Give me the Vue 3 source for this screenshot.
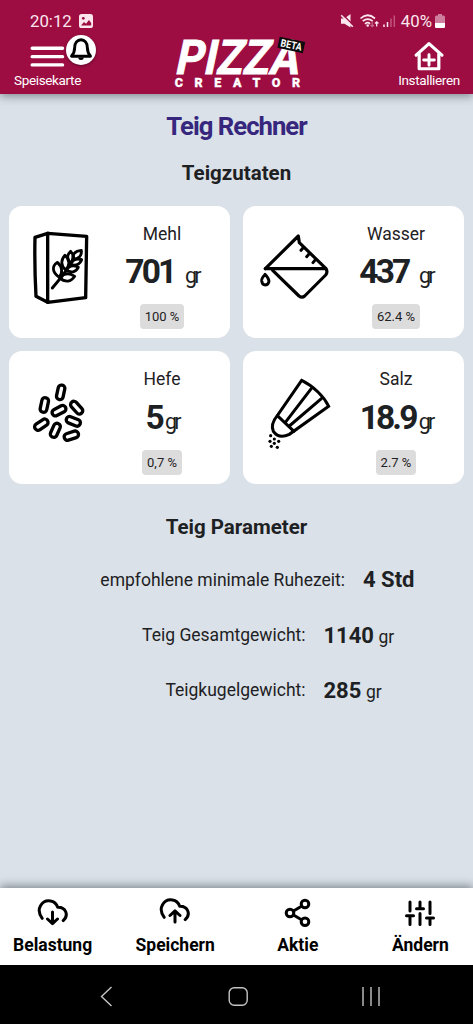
<script setup>
const ingredients = [
  { id: 'flour', name: 'Mehl', amount: '701', gap: true, share: '100 %', box: '27 33 258 396' },
  { id: 'water', name: 'Wasser', amount: '437', gap: true, share: '62.4 %', box: '30 33 258 396' },
  { id: 'yeast', name: 'Hefe', amount: '5', gap: false, share: '0,7 %', box: '27 18 258 396' },
  { id: 'salt', name: 'Salz', amount: '18.9', gap: false, share: '2.7 %', box: '30 18 258 396' },
]
const grains = [
  [182, 142, 12], [133, 180, 12], [177, 197, 62], [230, 188, -42],
  [220, 229, -68], [124, 239, 56], [166, 256, 24], [214, 272, 72],
]
const specks = [[113, 272], [124, 282], [111, 289], [137, 289], [124, 295], [115, 304], [133, 307]]
const params = [
  { label: 'empfohlene minimale Ruhezeit:', value: '4 Std', unit: '', cls: 'p1' },
  { label: 'Teig Gesamtgewicht:', value: '1140', unit: 'gr', cls: 'p2' },
  { label: 'Teigkugelgewicht:', value: '285', unit: 'gr', cls: 'p3' },
]
</script>

<template>
  <div class="screen">
    <header class="top">
      <div class="status">
        <span class="clock">20:12</span>
        <svg class="photo" width="14" height="14" viewBox="0 0 14 14">
          <rect width="14" height="14" rx="2.6" fill="#fbe6ee" />
          <circle cx="4.3" cy="4.3" r="1.4" fill="#9d0d42" />
          <path d="M2 11.4 5 8l2 1.7L10 6l2.2 3v2.4z" fill="#9d0d42" />
        </svg>
        <svg class="signals" width="56" height="16" viewBox="0 0 56 16" fill="none" stroke="#fbe6ee">
          <path d="M1 5.500h3.500L10.500 1v13.500L4.500 10.800H1z" fill="#fbe6ee" stroke="none" />
          <path d="M2.500 1.500 14 13" stroke="#9d0d42" stroke-width="1.600" />
          <path d="M1.200 2.200 12.800 13.800" stroke-width="1.600" />
          <path d="M20.500 5.500q7-6.500 14.500 0M22.700 8.200q5-4.300 10 0M25 10.800q2.800-2.200 5 0" stroke-width="1.700" />
          <circle cx="27.700" cy="12.500" r="1.300" fill="#fbe6ee" stroke="none" />
          <path d="M32.200 8.500v5M30.500 12l1.700 1.700 1.700-1.700" stroke="#c66a8c" stroke-width="1.200" />
          <path d="M36.700 13.500V9M35 10.500 36.700 8.800 38.400 10.500" stroke-width="1.300" />
          <path d="M44 14v-2.500M47.500 14V9" stroke-width="1.500" />
          <path d="M51 14V5.500M54.300 14V2.500" stroke="#c1537c" stroke-width="1.500" />
        </svg>
        <span class="percent">40%</span>
        <svg class="battery" width="10" height="14" viewBox="0 0 10 14">
          <path d="M3 0h4v1.500h1.500Q10 1.500 10 3v9.500Q10 14 8.500 14h-7Q0 14 0 12.500V3Q0 1.500 1.500 1.500H3z" fill="#cf7d9d" />
          <path d="M0 9h10v3.500Q10 14 8.500 14h-7Q0 14 0 12.500z" fill="#fff" />
        </svg>
      </div>
      <div class="brandbar">
        <div class="action menu">
          <svg class="bars" width="68" height="36" viewBox="0 0 68 36" fill="none" stroke="#fff" stroke-width="3.400" stroke-linecap="round">
            <path d="M17.700 12.600h31.300M17.700 21.300h31.300M17.700 29.700h31.300" />
          </svg>
          <span class="badge">
            <svg width="30" height="30" viewBox="0 0 30 30" fill="none" stroke="#000" stroke-width="2.900" stroke-linejoin="round" stroke-linecap="round">
              <path d="M5.500 21.200h19c-2.200-2.600-3.200-5.400-3.200-9C21.300 8 18.700 4.700 15 4.700S8.700 8 8.700 12.200c0 3.600-1 6.400-3.200 9z" />
              <path d="M12.300 22.500a2.700 2.500 0 0 0 5.400 0z" fill="#000" stroke="none" />
            </svg>
          </span>
          <span class="caption">Speisekarte</span>
        </div>
        <svg class="logo" width="136" height="58" viewBox="170 36 136 58">
          <g fill="#fff" font-family="Roboto, sans-serif" font-weight="700">
            <text transform="translate(174 73.800) skewX(-12)" font-size="48" font-weight="700" textLength="123.500" lengthAdjust="spacingAndGlyphs" stroke="#fff" stroke-width=".9">PIZZA</text>
            <text x="174.700" y="87.300" font-size="12.500" font-weight="900" textLength="125.500" stroke="#fff" stroke-width=".3">CREATOR</text>
          </g>
          <g transform="rotate(12 291.500 44)">
            <rect x="278.500" y="39.300" width="26" height="11.400" fill="#0b0b0b" />
            <text x="280.800" y="48.700" font-size="10.500" font-weight="700" font-family="Roboto, sans-serif" textLength="21.500" lengthAdjust="spacingAndGlyphs" fill="#fff">BETA</text>
          </g>
        </svg>
        <div class="action install">
          <svg width="34" height="36" viewBox="0 0 34 36" fill="none" stroke="#fff" stroke-linecap="round" stroke-linejoin="round">
            <path d="M3.800 19.700 17 7.800l13.300 11.900" stroke-width="3.300" />
            <path d="M6.900 18.500v15.200h20.200V18.500" stroke-width="3.300" />
            <path d="M17 19.200v11M11.500 24.700h11" stroke-width="3" />
          </svg>
          <span class="caption">Installieren</span>
        </div>
      </div>
    </header>

    <main class="content">
      <h1>Teig Rechner</h1>
      <h2 class="h-ingredients">Teigzutaten</h2>
      <section class="cards">
        <article v-for="i in ingredients" :key="i.id" class="card">
          <svg class="pic" :viewBox="i.box" fill="none" stroke="#000" stroke-width="10" stroke-linejoin="round" stroke-linecap="round">
            <template v-if="i.id === 'flour'">
              <path d="M143 115 260 124 257 308 143 322z" />
              <path d="M143 115 105 127Q103 213 108 304L143 322" />
              <path d="M157 279 186 244Q206 218 218 194" stroke-width="9" />
              <g stroke-width="8.500">
                <path d="M178 247C156 232 155 213 172 202c15 13 17 31 6 45z" />
                <path d="M197 225c-15-14-15-30-2-44 14 13 16 29 2 44z" />
                <path d="M212 205c-12-13-12-25 0-36 11 12 12 24 0 36z" />
                <path d="M219 193C216 178 225 168 244 166c2 15-7 26-25 27z" />
                <path d="M178 248c13-13 29-16 46-4-11 17-27 20-46 4z" />
                <path d="M198 225c9-13 22-16 37-8-8 15-21 18-37 8z" />
                <path d="M211 207c8-14 19-18 34-13-6 15-18 20-34 13z" />
              </g>
            </template>
            <template v-else-if="i.id === 'water'">
              <path d="M97 221 196 123 199 143 279 221Q285 231 278 240L215 303Q207 310 198 303L119 226" stroke-width="9.500" />
              <path d="M97 221H278" stroke-width="9.500" />
              <path d="M212 157 204 166M230 175 221 185M248 193 240 203" stroke-width="9" />
              <path d="M96 238Q85 250 86 258Q88 270 97 270Q107 269 108 258Q107 249 96 238z" stroke-width="8.500" />
            </template>
            <template v-else-if="i.id === 'yeast'">
              <rect v-for="(g, n) in grains" :key="n" x="-10" y="-22" width="20" height="44" rx="9.500" stroke-width="10" :transform="`translate(${g[0]} ${g[1]}) rotate(${g[2]})`" />
            </template>
            <template v-else>
              <g stroke-width="9" stroke-linejoin="miter">
                <path d="M206 106 135 209Q111 238 121 259Q138 283 169 268L287 184Q276 161 255 141Q233 119 206 106z" />
                <path d="M133 212 183 259M157 232 237 128M169 243 266 160" />
              </g>
              <circle v-for="(s, n) in specks" :key="n" :cx="s[0]" :cy="s[1]" r="4.800" fill="#000" stroke="none" />
            </template>
          </svg>
          <div class="facts">
            <span class="name">{{ i.name }}</span>
            <span class="amount"><b>{{ i.amount }}</b><span class="unit" :class="{ spaced: i.gap }">gr</span></span>
            <span class="share">{{ i.share }}</span>
          </div>
        </article>
      </section>
      <h2 class="h-params">Teig Parameter</h2>
      <dl class="params">
        <div v-for="p in params" :key="p.label" class="param" :class="p.cls">
          <dt>{{ p.label }}</dt>
          <dd><b>{{ p.value }}</b><span v-if="p.unit" class="weight">{{ p.unit }}</span></dd>
        </div>
      </dl>
    </main>

    <nav class="tabs">
      <a class="tab">
        <svg width="34" height="32" viewBox="0 0 34 32">
          <path d="M6.200 22.300C-.8 13 6 3.700 14.500 5c4.300.7 6.300 3.600 7.200 6.200 8-.3 11.500 8 5.500 13.400M16.500 16v11M11.500 23l5 4.600 5-4.600" />
        </svg>
        <span>Belastung</span>
      </a>
      <a class="tab">
        <svg width="34" height="32" viewBox="0 0 34 32">
          <path d="M6.200 21.300C-.8 12 6 2.700 14.500 4c4.300.7 6.300 3.600 7.200 6.200 8-.3 11.500 8 5.500 13.400M17 26V15.500M12 19.500l5-4.600 5 4.600" />
        </svg>
        <span>Speichern</span>
      </a>
      <a class="tab">
        <svg width="34" height="32" viewBox="0 0 34 32">
          <path d="M12.500 15 20.500 10.200M12.500 19 20.500 23.800" />
          <circle cx="9" cy="17" r="3.800" /><circle cx="24" cy="8" r="3.800" /><circle cx="24" cy="25.700" r="3.800" />
        </svg>
        <span>Aktie</span>
      </a>
      <a class="tab">
        <svg width="34" height="32" viewBox="0 0 34 32">
          <path d="M7 6v9M3.500 19.700h7M7 20v8.500M17 6v6M13.500 12.700h7M17 17.500v11M27 6v11.500M23.500 22h7M27 22v6.500" />
        </svg>
        <span>Ändern</span>
      </a>
    </nav>
    <footer class="system">
      <svg width="473" height="59" viewBox="0 0 473 59" fill="none" stroke="#c4c4c4" stroke-width="1.400">
        <path d="M111.500 22 101.500 31.500 111.500 41" />
        <rect x="229.200" y="22.700" width="18" height="17.600" rx="5" />
        <path d="M363 22v19M371 22v19M379 22v19" />
      </svg>
    </footer>
  </div>
</template>

<style>
body { margin: 0; background: #dae1e8; }
</style>

<style scoped>
.screen {
  display: flex; flex-direction: column; width: 473px; height: 1024px;
  overflow: hidden; background: #dae1e8; color: #1e2123;
  font-family: Roboto, "Liberation Sans", sans-serif;
}
.top { height: 94px; background: #9d0d42; color: #fff; box-shadow: 0 2px 9px rgba(60, 70, 80, .6); }
.status { display: flex; align-items: center; height: 42px; padding: 0 28px 0 30px; color: #fbe6ee; font-size: 16.8px; }
.photo { margin-left: 7.500px; }
.signals { margin-left: auto; margin-right: 5px; }
.battery { margin-left: 3px; }
.brandbar { display: flex; justify-content: space-between; height: 52px; margin-top: -6px; padding: 0 13px 0 14px; }
.action { position: relative; display: flex; flex-direction: column; align-items: center; width: 68px; }
.menu { align-items: flex-start; }
.install { width: 62px; }
.caption { margin-top: 1px; font-size: 13.500px; line-height: 16px; letter-spacing: -.35px; white-space: nowrap; }
.badge {
  position: absolute; left: 52px; top: -1px; width: 30px; height: 30px;
  border-radius: 50%; background: #fff; box-shadow: 0 1px 3px rgba(0, 0, 0, .4);
}
.badge svg { display: block; }
.logo { margin-right: 4px; overflow: visible; }
.content { flex: 1; display: flex; flex-direction: column; }
h1, h2 { margin: 0; text-align: center; }
h1 { padding-top: 16px; font-size: 25.700px; line-height: 32px; letter-spacing: -1px; color: #36267d; font-weight: 700; }
h2 { font-size: 20.500px; line-height: 24px; font-weight: 700; }
.h-ingredients { margin: 19px 0 21px; }
.cards { display: grid; grid-template-columns: 221px 221px; grid-template-rows: 132px 133px; gap: 13px; justify-content: center; }
.card { display: flex; background: #fff; border-radius: 13px; }
.pic { width: 86px; height: 132px; overflow: visible; flex: none; }
.facts { flex: 1; display: flex; flex-direction: column; align-items: center; padding: 16px 1px 0 0; }
.name { font-size: 17.500px; line-height: 24px; }
.amount { height: 40px; margin-top: 6px; line-height: 40px; white-space: nowrap; letter-spacing: -2.900px; }
.amount b { font-size: 33.500px; }
.unit { margin-left: 3.200px; font-size: 21.500px; }
.spaced { margin-left: 10.800px; }
.share { margin-top: 12px; padding: 0 5px; border-radius: 4px; background: #dcdcdc; font-size: 13px; line-height: 25px; }
.card:nth-child(n + 3) .amount { margin-top: 7px; }
.h-params { margin-top: 31px; }
.params { margin: 13px 0 0; }
.param { display: flex; align-items: center; height: 55.400px; }
.param dt { font-size: 17.500px; text-align: right; white-space: nowrap; }
.param dd { margin: 0 0 0 18px; font-size: 17.500px; white-space: nowrap; }
.param b { font-size: 22px; }
.weight { margin-left: 4.500px; }
.p1 dt { width: 345px; }
.p2 dt, .p3 dt { width: 305.500px; }
.tabs { display: grid; grid-template-columns: repeat(4, 122.600px); justify-content: center; height: 77px; background: #fff; color: #000; box-shadow: 0 -2px 9px rgba(60, 70, 80, .6); }
.tab { display: flex; flex-direction: column; align-items: center; padding-top: 8px; font-size: 17.500px; font-weight: 700; line-height: 22px; }
.tab svg { fill: none; stroke: #000; stroke-width: 3; stroke-linecap: round; stroke-linejoin: round; }
.tab span { margin-top: 6px; }
.system { height: 59px; background: #000; }
.system svg { display: block; }
</style>
